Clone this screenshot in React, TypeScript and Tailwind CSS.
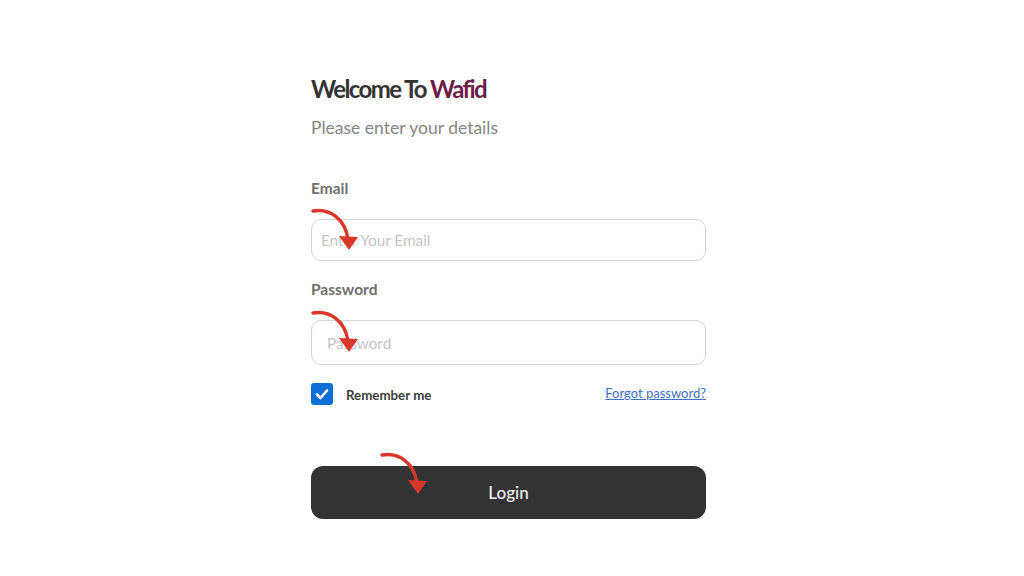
import { useState } from 'react'

function RedArrow({ className }: { className: string }) {
  return (
    <svg width="52" height="48" viewBox="0 0 52 48" fill="none" className={className}>
      <path d="M5 5 C 22 2, 37 13, 40 33" stroke="#d8382c" strokeWidth="3.5" strokeLinecap="round" />
      <polygon points="31,30 50,31 41,44" fill="#d8382c" />
    </svg>
  )
}

export default function App() {
  const [remember, setRemember] = useState(true)

  return (
    <div className="w-[1024px] h-[576px] bg-white font-['Lato','Liberation_Sans',sans-serif] overflow-hidden">
      <div className="w-[395px] ml-[311px] pt-[74px] flex flex-col">
        <h1 className="text-[24px] leading-[30px] font-bold tracking-[-1.6px] text-[#333333]">
          Welcome To <span className="text-[#6b1d48]">Wafid</span>
        </h1>
        <p className="mt-[13px] text-[17.5px] leading-[21px] text-[#858585]">Please enter your details</p>

        <label className="mt-[40px] text-[15.5px] leading-[20px] font-bold text-[#6f6f6f]">Email</label>
        <div className="relative mt-[21px]">
          <input
            type="email"
            placeholder="Enter Your Email"
            className="w-full h-[42px] rounded-[10px] border border-[#d4d4d4] px-[9px] text-[15.3px] placeholder:text-[#c4c4c4] outline-none"
          />
          <RedArrow className="absolute left-[-3px] top-[-13px] pointer-events-none" />
        </div>

        <label className="mt-[18px] text-[15.5px] leading-[20px] font-bold text-[#6f6f6f]">Password</label>
        <div className="relative mt-[21px]">
          <input
            type="password"
            placeholder="Password"
            className="w-full h-[45px] rounded-[10px] border border-[#d4d4d4] px-[15px] text-[15.3px] placeholder:text-[#c4c4c4] outline-none"
          />
          <RedArrow className="absolute left-[-3px] top-[-12px] pointer-events-none" />
        </div>

        <div className="mt-[18px] flex items-center justify-between h-[22px]">
          <label className="flex items-center gap-[13px] cursor-pointer">
            <button
              onClick={() => setRemember(!remember)}
              className={`w-[22px] h-[22px] rounded-[3px] flex items-center justify-center ${
                remember ? 'bg-[#0d6fd6]' : 'border border-gray-400 bg-white'
              }`}
            >
              {remember && (
                <svg width="16" height="16" viewBox="0 0 16 16" fill="none">
                  <path d="M3 8.5 L6.5 12 L13 4.5" stroke="white" strokeWidth="2.6" strokeLinecap="round" strokeLinejoin="round" />
                </svg>
              )}
            </button>
            <span className="text-[13.3px] font-bold text-[#3d3d3d] translate-y-[2px]">Remember me</span>
          </label>
          <a href="#" className="text-[13px] text-[#3d6fc2] underline">
            Forgot password?
          </a>
        </div>

        <div className="relative mt-[61px]">
          <button className="w-full h-[53px] rounded-[12px] bg-[#333333] text-[17px] text-[#f2f2f2] font-medium">
            Login
          </button>
          <RedArrow className="absolute left-[66px] top-[-16px] pointer-events-none" />
        </div>
      </div>
    </div>
  )
}
